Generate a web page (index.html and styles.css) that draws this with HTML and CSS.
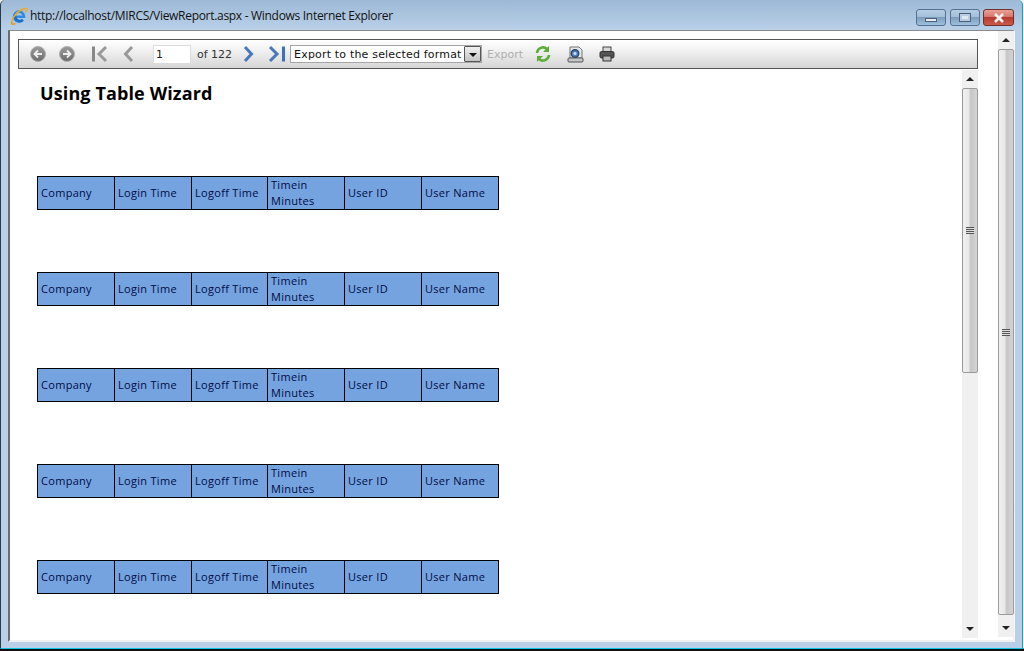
FILE: index.html
```html
<!DOCTYPE html>
<html lang="en">
<head>
<meta charset="utf-8">
<title>ViewReport</title>
<link rel="stylesheet" href="styles.css">
</head>
<body>
<div class="window">
  <header class="titlebar">
    <svg class="ie-logo" width="18" height="18" viewBox="0 0 18 18">
      <path d="M4.700 9.700h9.300a5 5 0 1 0-1.200 3.200" fill="none" stroke="#2e8ce0" stroke-width="2.600"/>
      <path d="M5 9.700a5 5 0 0 0 8 3.200" fill="none" stroke="#1d6fc4" stroke-width="2.400"/>
      <path d="M2 16.500C1 13 5 6 11 3c3-1.500 5.500-2 6-1 .4 1-1 2.500-2 3.500" fill="none" stroke="#eda825" stroke-width="1.500"/>
      <path d="M1.500 15c-.6 2 1 2.800 4 1.500" fill="none" stroke="#e89a1c" stroke-width="1.500"/>
    </svg>
    <span class="title-text">http://localhost/MIRCS/ViewReport.aspx - Windows Internet Explorer</span>
    <div class="win-buttons">
      <div class="win-btn"><span class="glyph-min"></span></div>
      <div class="win-btn"><span class="glyph-max"></span></div>
      <div class="win-btn win-close"><svg width="14" height="10" viewBox="0 0 14 10"><path d="M3 1l8 8M11 1l-8 8" stroke="#f4f0ee" stroke-width="2.600"/></svg></div>
    </div>
  </header>
  <div class="client">
    <main class="page">
      <div class="toolbar">
        <svg class="tb-icon round" width="18" height="18" viewBox="0 0 18 18"><defs><linearGradient id="rg" x1="0" y1="0" x2="0" y2="1"><stop offset="0" stop-color="#9a9a9a"/><stop offset="1" stop-color="#6c6c6c"/></linearGradient></defs><circle cx="9" cy="9" r="7.500" fill="url(#rg)" stroke="#b0b0b0"/><path d="M13 9H6M9 5.500L5.500 9 9 12.500" fill="none" stroke="#eee" stroke-width="1.800"/></svg>
        <svg class="tb-icon round2" width="18" height="18" viewBox="0 0 18 18"><circle cx="9" cy="9" r="7.500" fill="url(#rg)" stroke="#b0b0b0"/><path d="M5 9h7M9 5.500L12.500 9 9 12.500" fill="none" stroke="#eee" stroke-width="1.800"/></svg>
        <svg class="tb-icon first" width="18" height="18" viewBox="0 0 18 18"><path d="M2.500 1.500v15" stroke="#888" stroke-width="3"/><path d="M15 2L8 9l7 7" fill="none" stroke="#999" stroke-width="3"/></svg>
        <svg class="tb-icon prev" width="12" height="18" viewBox="0 0 12 18"><path d="M10 2L3.500 9l6.500 7" fill="none" stroke="#999" stroke-width="3"/></svg>
        <span class="page-input">1</span>
        <span class="page-count">of 122</span>
        <svg class="tb-icon next" width="12" height="18" viewBox="0 0 12 18"><path d="M2 2l6.500 7L2 16" fill="none" stroke="#4a78bc" stroke-width="3"/></svg>
        <svg class="tb-icon last" width="18" height="18" viewBox="0 0 18 18"><path d="M2 2l7 7-7 7" fill="none" stroke="#4a78bc" stroke-width="3"/><path d="M15.500 1.500v15" stroke="#3d70b8" stroke-width="3"/></svg>
        <div class="select">
          <span class="select-text">Export to the selected format</span>
          <span class="select-arrow"></span>
        </div>
        <span class="export">Export</span>
        <svg class="tb-icon refresh" width="18" height="18" viewBox="0 0 18 18"><path d="M3 8a6 6 0 0 1 10-4" fill="none" stroke="#5fae3c" stroke-width="2.600"/><path d="M15 1v6H9z" fill="#5fae3c"/><path d="M15 10a6 6 0 0 1-10 4" fill="none" stroke="#5fae3c" stroke-width="2.600"/><path d="M3 17v-6h6z" fill="#5fae3c"/></svg>
        <svg class="tb-icon zoom-doc" width="17" height="17" viewBox="0 0 17 17"><path d="M3 1h9l3 3v8H3z" fill="#e4e8ee" stroke="#777"/><rect x="1" y="12" width="15" height="4" rx="1" fill="#c4c6ca" stroke="#555"/><circle cx="8" cy="7.500" r="3.800" fill="#4a80c8" stroke="#33465e" stroke-width="1.400"/><circle cx="8" cy="7.500" r="1.500" fill="#cfe0f4"/></svg>
        <svg class="tb-icon print" width="16" height="16" viewBox="0 0 16 16"><rect x="4" y="1" width="8" height="5" fill="#d8d8d8" stroke="#444"/><rect x="1" y="5.500" width="14" height="6.500" rx="1.500" fill="#555" stroke="#333"/><rect x="4" y="10" width="8" height="5" fill="#bbb" stroke="#333"/></svg>
      </div>
      <div class="report-row">
        <section class="report">
          <h1 class="report-title">Using Table Wizard</h1>
          <div class="report-table">
            <div class="cell">Company</div><div class="cell">Login Time</div><div class="cell">Logoff Time</div><div class="cell">Timein Minutes</div><div class="cell">User ID</div><div class="cell">User Name</div>
          </div>
          <div class="report-table">
            <div class="cell">Company</div><div class="cell">Login Time</div><div class="cell">Logoff Time</div><div class="cell">Timein Minutes</div><div class="cell">User ID</div><div class="cell">User Name</div>
          </div>
          <div class="report-table">
            <div class="cell">Company</div><div class="cell">Login Time</div><div class="cell">Logoff Time</div><div class="cell">Timein Minutes</div><div class="cell">User ID</div><div class="cell">User Name</div>
          </div>
          <div class="report-table">
            <div class="cell">Company</div><div class="cell">Login Time</div><div class="cell">Logoff Time</div><div class="cell">Timein Minutes</div><div class="cell">User ID</div><div class="cell">User Name</div>
          </div>
          <div class="report-table">
            <div class="cell">Company</div><div class="cell">Login Time</div><div class="cell">Logoff Time</div><div class="cell">Timein Minutes</div><div class="cell">User ID</div><div class="cell">User Name</div>
          </div>
        </section>
        <div class="scrollbar inner-bar">
          <span class="arrow-up"></span>
          <div class="thumb inner-thumb"><span class="grip"></span></div>
          <div class="track-rest"></div>
          <span class="arrow-down"></span>
        </div>
      </div>
    </main>
    <div class="scrollbar outer-bar">
      <span class="arrow-up"></span>
      <div class="thumb outer-thumb"><span class="grip"></span></div>
      <div class="track-rest"></div>
      <span class="arrow-down"></span>
    </div>
  </div>
</div>
</body>
</html>
```
FILE: styles.css
```css
* { box-sizing: border-box; }
html, body { margin: 0; height: 100%; background: #ededed; overflow: hidden; }
body { background: linear-gradient(#f4f4f4 0, #f4f4f4 648px, #111 649px); }
.window {
  width: 1023px; height: 649px; display: flex; flex-direction: column;
  background: linear-gradient(#9db9d6 0, #b9d0e8 30px);
  border-bottom: 1px solid #10c4e4; border-right: 1px solid #10a0c0; border-left: 1px solid #2a3a4a;
  border-radius: 5px 5px 0 0;
}
.titlebar { height: 30px; flex: none; display: flex; align-items: center; padding: 0 8px 0 9px; }
.ie-logo { margin-right: 2px; margin-top: 2px; }
.title-text { font: 12px "Open Sans", "Noto Sans", sans-serif; color: #111; letter-spacing: -.3px; }
.win-buttons { margin-left: auto; display: flex; gap: 4px; margin-top: 5px; }
.win-btn {
  width: 30px; height: 17px; border: 1px solid #56708f; border-radius: 3px;
  background: linear-gradient(#b4cde4 0, #a4bfd9 45%, #7d9dbd 50%, #9cc0dd 100%);
  display: flex; align-items: center; justify-content: center;
}
.win-close { width: 31px; margin-left: -1px; border-color: #70302c; background: linear-gradient(#e8a096 0, #d8766c 45%, #b83a2e 50%, #cc5a48 100%); }
.glyph-min { width: 12px; height: 4px; margin-top: 5px; background: #e8edf2; border: 1px solid #4c5f78; }
.glyph-max { width: 12px; height: 9px; background: #dfe7f0; border: 1px solid #4c5f78; box-shadow: inset 0 0 0 2px #b8cbe0; }
.client {
  flex: 1; min-height: 0; margin: 0 7px 6px 7px; background: #fff; display: flex;
  border-left: 2px solid #6d6d6d; border-top: 1px solid #8a8a8a; border-bottom: 2px solid #f0f0f0; border-right: 2px solid #f4f4f4;
}
.page { width: 987px; flex: none; display: flex; flex-direction: column; padding: 8px 0 0 8px; }
.toolbar {
  width: 960px; height: 30px; flex: none; display: flex; align-items: center;
  border: 1px solid #565656; background: linear-gradient(#fff 0, #f2f2f2 35%, #d6d6d6 100%);
}
.tb-icon { flex: none; }
.round { margin-left: 10px; }
.round2 { margin-left: 11px; }
.first { margin-left: 15px; }
.prev { margin-left: 13px; }
.page-input {
  width: 38px; height: 19px; margin-left: 19px; background: #fff; border: 1px solid #dcdcdc;
  padding-left: 2px; font: 11px/17px "DejaVu Sans", sans-serif; color: #222;
}
.page-count { margin-left: 6px; font: 11px "DejaVu Sans", sans-serif; color: #333; white-space: nowrap; }
.next { margin-left: 11px; }
.last { margin-left: 13px; }
.select {
  width: 192px; height: 18px; margin-left: 4px; border: 1px solid #a6a6a6; background: #fff;
  display: flex; align-items: center; justify-content: space-between;
}
.select-text { font: 11px "DejaVu Sans", sans-serif; color: #111; padding-left: 3px; white-space: nowrap; letter-spacing: .18px; }
.select-arrow {
  width: 17px; height: 16px; flex: none; border: 1px solid #555; border-radius: 1px;
  background: linear-gradient(#efefef, #c4c4c4); position: relative;
}
.select-arrow::after {
  content: ""; position: absolute; left: 4px; top: 6px;
  border: 4px solid transparent; border-top: 4px solid #111; border-bottom: 0;
}
.export { margin-left: 5px; font: 11px "DejaVu Sans", sans-serif; color: #b0b0b0; }
.refresh { margin-left: 11px; }
.zoom-doc { margin-left: 15px; }
.print { margin-left: 15px; }
.report-row { flex: 1; min-height: 0; width: 960px; display: flex; overflow: hidden; }
.report { flex: 1; min-width: 0; padding: 11px 0 0 19px; }
.report-title {
  margin: 0 0 70px 3px; font: bold 18px/26px "Open Sans", "Noto Sans", sans-serif; color: #000; letter-spacing: .12px;
}
.report-table {
  width: 462px; height: 34px; margin-bottom: 62px; display: grid;
  grid-template-columns: 77px 77px 76px 77px 77px 78px;
  background: #75a3e0; border: 1px solid #000; border-left: 0;
}
.cell {
  border-left: 1px solid #000; display: flex; align-items: center; padding: 0 3px;
  font: 11px/16px "Open Sans", "Noto Sans", sans-serif; color: #000c44; letter-spacing: .3px;
}
.scrollbar { flex: none; display: flex; flex-direction: column; align-items: center; background: #f0f0f0; }
.inner-bar { margin-top: 1px; margin-bottom: 2px; width: 16px; }
.outer-bar { width: 16px; margin-left: 1px; margin-bottom: 3px; }
.arrow-up { height: 18px; flex: none; display: flex; align-items: center; }
.arrow-up::before { content: ""; border: 4px solid transparent; border-bottom: 4px solid #222; border-top: 0; }
.arrow-down { height: 18px; flex: none; display: flex; align-items: center; }
.arrow-down::before { content: ""; border: 4px solid transparent; border-top: 4px solid #222; border-bottom: 0; }
.thumb {
  width: 100%; flex: none; border: 1px solid #9a9a9a; border-radius: 2px; display: flex;
  align-items: center; justify-content: center;
  background: linear-gradient(90deg, #f0f0f0 0, #e8e8e8 40%, #c6c6c6 55%, #d4d4d4 100%);
}
.inner-thumb { height: 285px; }
.outer-thumb { height: 566px; }
.track-rest { flex: 1; min-height: 0; }
.grip { width: 8px; height: 7px; background: repeating-linear-gradient(#555 0, #555 1px, #ddd 1px, #ddd 2px); }
```
